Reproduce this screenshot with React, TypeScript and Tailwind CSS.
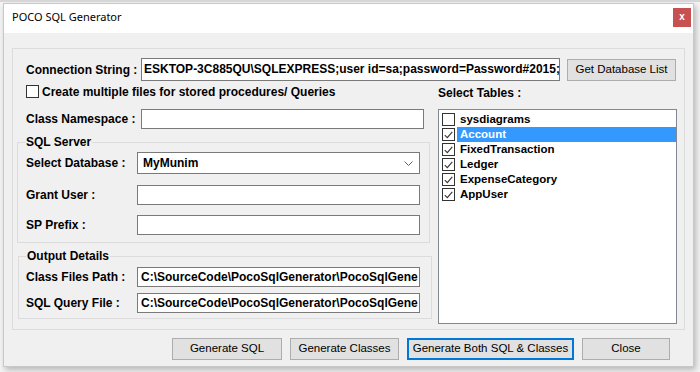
import React from "react";

const label = "shrink-0 text-[12px] font-bold text-black";
const box = "h-[20px] border border-[#7a7a7a] bg-white px-[3px] text-[12px] font-bold leading-[18px] text-black overflow-hidden whitespace-nowrap";
const btn = "h-[22px] border border-[#adadad] bg-[#e1e1e1] text-[11.5px] text-black";

function Check({ checked }: { checked?: boolean }) {
  return (
    <span className="flex h-[13px] w-[13px] shrink-0 items-center justify-center border border-[#333] bg-white">
      {checked && (
        <svg width="9" height="8" viewBox="0 0 9 8" fill="none">
          <path d="M0.8 4.2 L3.3 6.7 L8.3 0.8" stroke="#333" strokeWidth="1.1" />
        </svg>
      )}
    </span>
  );
}

const tables = [
  { name: "sysdiagrams", checked: false },
  { name: "Account", checked: true, selected: true },
  { name: "FixedTransaction", checked: true },
  { name: "Ledger", checked: true },
  { name: "ExpenseCategory", checked: true },
  { name: "AppUser", checked: true },
];

export default function App() {
  return (
    <div className="h-[372px] w-[700px] overflow-hidden border-t-[2px] border-[#d6d6d6] bg-[#f4f4f4]" style={{ fontFamily: '"Liberation Sans", Arial, sans-serif' }}>
      <div className="ml-[3px] mt-px flex h-[364px] w-[691px] flex-col border border-[#c8c8c8] bg-[#f0f0f0] shadow-[2px_3px_6px_rgba(0,0,0,0.25)]">
        {/* title bar */}
        <div className="flex h-[29px] shrink-0 items-center justify-between bg-white pl-[8px] pr-[2px]">
          <span className="mt-[-2px] text-[11px] text-black" style={{ fontFamily: '"Noto Sans", "Open Sans", sans-serif' }}>POCO SQL Generator</span>
          <span className="mt-[-3px] flex h-[19px] w-[18px] items-center justify-center bg-[#c75050] text-[10px] font-bold leading-none text-white">x</span>
        </div>

        {/* main panel */}
        <div className="ml-[8px] mt-[15px] flex h-[282px] w-[673px] flex-col border border-[#dcdcdc] pl-[4px] pt-[9px]">
          <div className="flex h-[23px] items-center">
            <span className={`${label} w-[124px] pl-[9px]`}>Connection String :</span>
            <div className="h-[23px] w-[419px] overflow-hidden whitespace-nowrap border border-[#7a7a7a] bg-white px-[2px] text-[12px] font-bold leading-[21px]">ESKTOP-3C885QU\SQLEXPRESS;user id=sa;password=Password#2015;</div>
            <button className={`${btn} ml-[7px] w-[109px]`}>Get Database List</button>
          </div>

          <div className="flex">
            {/* left column */}
            <div className="flex w-[421px] flex-col">
              <div className="mt-[4px] flex h-[13px] items-center gap-[3px] pl-[9px]">
                <Check />
                <span className={label}>Create multiple files for stored procedures/ Queries</span>
              </div>
              <div className="mt-[11px] flex items-center">
                <span className={`${label} w-[124px] pl-[9px]`}>Class Namespace :</span>
                <div className={`${box} w-[283px]`}></div>
              </div>

              <fieldset className="mt-[6px] h-[108px] w-[413px] border border-[#dcdcdc] px-[8px]">
                <legend className="ml-[-1px] px-[1px] text-[12px] font-bold leading-[14px]">SQL Server</legend>
                <div className="mt-[3px] flex items-center">
                  <span className={`${label} w-[111px]`}>Select Database :</span>
                  <div className="flex h-[22px] w-[283px] items-center justify-between border border-[#7a7a7a] bg-white pl-[5px] pr-[6px]">
                    <span className="text-[12px] font-bold">MyMunim</span>
                    <svg width="9" height="5" viewBox="0 0 9 5" fill="none">
                      <path d="M0.5 0.5 L4.5 4.5 L8.5 0.5" stroke="#606060" strokeWidth="1" />
                    </svg>
                  </div>
                </div>
                <div className="mt-[11px] flex items-center">
                  <span className={`${label} w-[111px]`}>Grant User :</span>
                  <div className={`${box} w-[283px]`}></div>
                </div>
                <div className="mt-[10px] flex items-center">
                  <span className={`${label} w-[111px]`}>SP Prefix :</span>
                  <div className={`${box} w-[283px]`}></div>
                </div>
              </fieldset>

              <fieldset className="ml-px mt-[6px] h-[70px] w-[414px] border border-[#dcdcdc] px-[7px]">
                <legend className="ml-0 px-px text-[12px] font-bold leading-[14px]">Output Details</legend>
                <div className="mt-[4px] flex items-center">
                  <span className={`${label} w-[111px]`}>Class Files Path :</span>
                  <div className={`${box} w-[283px]`}>C:\SourceCode\PocoSqlGenerator\PocoSqlGene</div>
                </div>
                <div className="mt-[6px] flex items-center">
                  <span className={`${label} w-[111px]`}>SQL Query File :</span>
                  <div className={`${box} w-[283px]`}>C:\SourceCode\PocoSqlGenerator\PocoSqlGene</div>
                </div>
              </fieldset>
            </div>

            {/* right column */}
            <div className="flex w-[239px] flex-col">
              <span className={`${label} mt-[5px] leading-[14px]`}>Select Tables :</span>
              <div className="mt-[9px] h-[215px] border border-[#828790] bg-white pl-[3px] pt-[2px]">
                {tables.map((t) => (
                  <div key={t.name} className="flex h-[15px] items-center gap-[2px]">
                    <Check checked={t.checked} />
                    <span className={`flex h-[15px] flex-1 items-center pl-[3px] text-[11.5px] font-bold ${t.selected ? "bg-[#3399ff] text-white" : "text-black"}`}>{t.name}</span>
                  </div>
                ))}
              </div>
            </div>
          </div>
        </div>

        {/* buttons */}
        <div className="mt-[8px] flex gap-[8px] pl-[168px]">
          <button className={`${btn} w-[110px]`}>Generate SQL</button>
          <button className={`${btn} w-[109px]`}>Generate Classes</button>
          <button className="h-[22px] w-[167px] border-2 border-[#0078d7] bg-[#e1e1e1] text-[11.5px] text-black">Generate Both SQL &amp; Classes</button>
          <button className={`${btn} w-[88px]`}>Close</button>
        </div>
      </div>
    </div>
  );
}
